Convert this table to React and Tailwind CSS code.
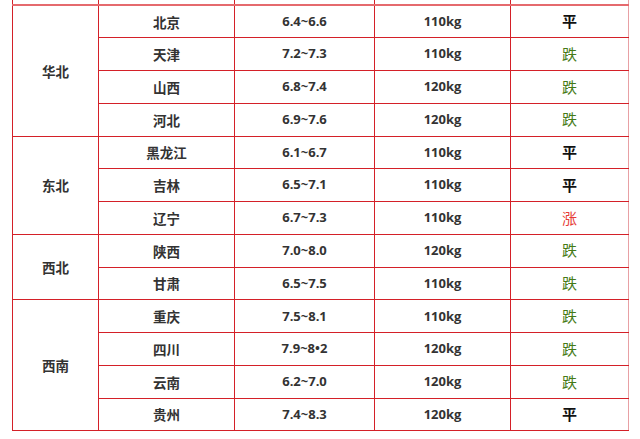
const GROUPS = [
  {
    name: "华北",
    rows: [
      ["北京", "6.4~6.6", "110kg", "平"],
      ["天津", "7.2~7.3", "110kg", "跌"],
      ["山西", "6.8~7.4", "120kg", "跌"],
      ["河北", "6.9~7.6", "120kg", "跌"],
    ],
  },
  {
    name: "东北",
    rows: [
      ["黑龙江", "6.1~6.7", "110kg", "平"],
      ["吉林", "6.5~7.1", "110kg", "平"],
      ["辽宁", "6.7~7.3", "110kg", "涨"],
    ],
  },
  {
    name: "西北",
    rows: [
      ["陕西", "7.0~8.0", "120kg", "跌"],
      ["甘肃", "6.5~7.5", "110kg", "跌"],
    ],
  },
  {
    name: "西南",
    rows: [
      ["重庆", "7.5~8.1", "110kg", "跌"],
      ["四川", "7.9~8•2", "120kg", "跌"],
      ["云南", "6.2~7.0", "120kg", "跌"],
      ["贵州", "7.4~8.3", "120kg", "平"],
    ],
  },
];

function trendClass(t) {
  if (t === "跌") return "text-[#457a16] font-normal";
  if (t === "涨") return "text-[#e63c36] font-normal";
  return "text-[#111] font-bold";
}

const cell = "border border-[#d42028] text-center align-middle p-0";

export default function App() {
  return (
    <div
      className="w-[640px] h-[439px] bg-white overflow-hidden pl-[12px]"
      style={{ fontFamily: '"Noto Sans CJK SC", "Noto Sans", sans-serif' }}
    >
      <table className="border-collapse w-[616px] table-fixed text-[13.5px] text-[#333] font-bold">
        <colgroup>
          <col className="w-[86px]" />
          <col className="w-[136px]" />
          <col className="w-[140px]" />
          <col className="w-[136px]" />
          <col className="w-[118px]" />
        </colgroup>
        <tbody>
          {/* cut-off row from above */}
          <tr className="h-[5px]">
            <td className="border-x border-[#d42028] border-b-2 border-b-[#e56a6e] p-0" />
            <td className="border-x border-[#d42028] border-b-2 border-b-[#e56a6e] p-0" />
            <td className="border-x border-[#d42028] border-b-2 border-b-[#e56a6e] p-0" />
            <td className="border-x border-[#d42028] border-b-2 border-b-[#e56a6e] p-0" />
            <td className="border-x border-x-[#e8a0a4] border-l-[#d42028] border-b-2 border-b-[#e56a6e] p-0" />
          </tr>
          {GROUPS.map((g) =>
            g.rows.map((r, i) => (
              <tr key={g.name + r[0]} className="h-[32.77px]">
                {i === 0 && (
                  <td rowSpan={g.rows.length} className={cell}>
                    {g.name}
                  </td>
                )}
                <td className={cell}>{r[0]}</td>
                <td className={cell + " font-['Open_Sans',sans-serif] text-[13px]"}>{r[1]}</td>
                <td className={cell + " font-['Open_Sans',sans-serif] text-[13px]"}>{r[2]}</td>
                <td className={cell + " border-r-[#e8a0a4] text-[15px] " + trendClass(r[3])}>{r[3]}</td>
              </tr>
            ))
          )}
        </tbody>
      </table>
    </div>
  );
}
